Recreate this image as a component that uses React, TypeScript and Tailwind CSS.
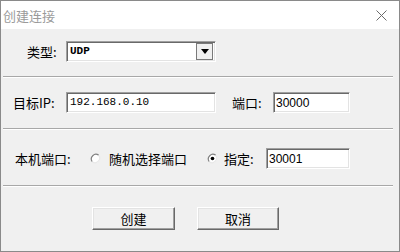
import React from "react";

const cjk = { fontFamily: '"Noto Sans CJK SC", "Noto Sans", sans-serif' };
const mono = { fontFamily: '"Liberation Mono", monospace' };
const sans = { fontFamily: '"Liberation Sans", Arial, sans-serif' };

const sunken =
  "border border-t-[#a0a0a0] border-l-[#a0a0a0] border-b-white border-r-white shadow-[inset_1px_1px_0_#696969,inset_-1px_-1px_0_#e3e3e3] bg-white";
const raised =
  "border border-t-white border-l-white border-b-[#696969] border-r-[#696969] shadow-[inset_-1px_-1px_0_#a0a0a0,inset_1px_1px_0_#e3e3e3] bg-[#f0f0f0]";

function Sep({ mt }: { mt: string }) {
  return <div className={`${mt} ml-[2px] w-[390px] h-[2px] border-t border-t-[#a8a8a8] border-b border-b-white`} />;
}

function Radio({ checked }: { checked?: boolean }) {
  return (
    <svg width="11" height="11" viewBox="0 0 12 12" className="shrink-0">
      <circle cx="6" cy="6" r="5" fill="#fff" />
      <path d="M9.5 2.5 A5 5 0 0 0 2.5 9.5" stroke="#808080" strokeWidth="1.3" fill="none" />
      <path d="M2.5 9.5 A5 5 0 0 0 9.5 2.5" stroke="#e8e8e8" strokeWidth="1.3" fill="none" />
      {checked && <circle cx="6" cy="6" r="2" fill="#000" />}
    </svg>
  );
}

export default function App() {
  return (
    <div className="w-[400px] h-[252px] border border-[#8a8a8a] bg-[#f0f0f0] flex flex-col text-black text-[13px] leading-none" style={cjk}>
      <div className="h-[28px] bg-white flex items-center justify-between shrink-0">
        <span className="ml-[2px] text-[#9a9a9a] text-[13px]">创建连接</span>
        <svg width="11" height="11" viewBox="0 0 11 11" className="mr-[12px]">
          <path d="M0.5 0.5 L10.5 10.5 M10.5 0.5 L0.5 10.5" stroke="#6a6a6a" strokeWidth="1" />
        </svg>
      </div>

      {/* Row 1 */}
      <div className="mt-[12px] h-[21px] flex items-center">
        <span className="ml-[26px] w-[39px]">类型:</span>
        <div className={`${sunken} w-[150px] h-[21px] flex items-center justify-between pr-[2px]`}>
          <span className="ml-[3px] text-[11px] font-bold" style={mono}>UDP</span>
          <div className="w-[17px] h-[17px] border border-[#7a7a7a] bg-[#f0f0f0] flex items-center justify-center">
            <svg width="8" height="5" viewBox="0 0 8 5"><path d="M0 0 H8 L4 5 Z" fill="#000" /></svg>
          </div>
        </div>
      </div>

      <Sep mt="mt-[14px]" />

      {/* Row 2 */}
      <div className="mt-[14px] h-[21px] flex items-center">
        <span className="ml-[12px] w-[53px]">目标IP:</span>
        <div className={`${sunken} w-[150px] h-[21px] flex items-center`}>
          <span className="ml-[3px] text-[11px]" style={mono}>192.168.0.10</span>
        </div>
        <span className="ml-[16px] w-[41px]">端口:</span>
        <div className={`${sunken} w-[77px] h-[21px] flex items-center`}>
          <span className="ml-[2px] text-[12px]" style={sans}>30000</span>
        </div>
      </div>

      <Sep mt="mt-[15px]" />

      {/* Row 3 */}
      <div className="mt-[18px] h-[21px] flex items-center">
        <span className="ml-[14px] w-[75px]">本机端口:</span>
        <Radio />
        <span className="ml-[8px] w-[98px]">随机选择端口</span>
        <Radio checked />
        <span className="ml-[6px] w-[42px]">指定:</span>
        <div className={`${sunken} w-[84px] h-[21px] flex items-center`}>
          <span className="ml-[2px] text-[12px]" style={sans}>30001</span>
        </div>
      </div>

      <Sep mt="mt-[16px]" />

      {/* Buttons */}
      <div className="mt-[20px] flex items-center">
        <button className={`${raised} ml-[91px] w-[83px] h-[23px] flex items-center justify-center text-[13px]`} style={cjk}>创建</button>
        <button className={`${raised} ml-[22px] w-[82px] h-[23px] flex items-center justify-center text-[13px]`} style={cjk}>取消</button>
      </div>
    </div>
  );
}
